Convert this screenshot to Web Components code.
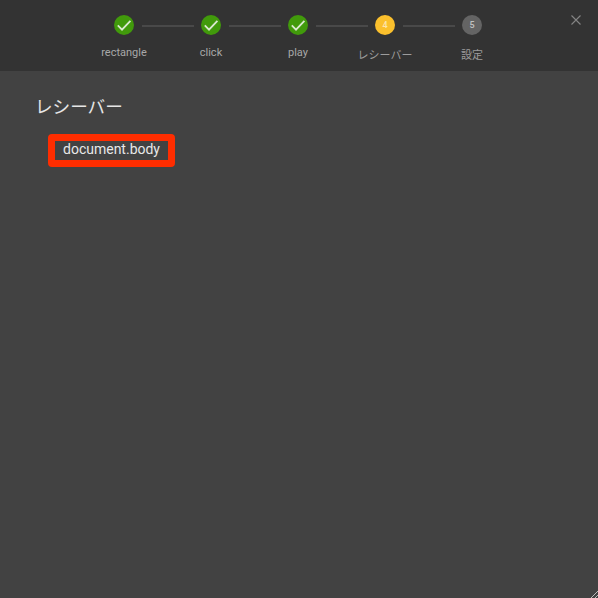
<!DOCTYPE html>
<html><head><meta charset="utf-8"><style>
html,body{margin:0;padding:0;height:100%;background:#424242}
body{font-family:Roboto,"Noto Sans CJK JP",sans-serif}
</style></head><body>
<app-dialog>
<step-bar>
<step-item state="done" label="rectangle"></step-item>
<step-item state="done" label="click"></step-item>
<step-item state="done" label="play"></step-item>
<step-item state="active" n="4" label="レシーバー"></step-item>
<step-item state="todo" n="5" label="設定" last></step-item>
</step-bar>
<receiver-panel heading="レシーバー"><receiver-chip>document.body</receiver-chip></receiver-panel>
</app-dialog>
<script>
function def(name,html){customElements.define(name,class extends HTMLElement{connectedCallback(){if(this.shadowRoot)return;const r=this.attachShadow({mode:'open'});r.innerHTML=typeof html==='function'?html(this):html;}})}
def('app-dialog',`<style>:host{display:flex;flex-direction:column;height:598px;width:598px;position:relative;overflow:hidden;background:#424242}
.grip{position:absolute;right:0;bottom:0;width:10px;height:10px}</style><slot></slot>
<svg class="grip" viewBox="0 0 10 10"><path d="M3 10L10 3M7 10L10 7" stroke="#bdbdbd" stroke-width="1" fill="none"/></svg>`);
def('step-bar',`<style>:host{display:flex;justify-content:center;height:71px;box-sizing:border-box;padding:15px 2px 0 0;background:#333;position:relative;flex:none}
.x{position:absolute;left:571px;top:15px;width:10px;height:10px}</style><slot></slot>
<svg class="x" viewBox="0 0 10 10"><path d="M.5 .5L9.5 9.5M9.5 .5L.5 9.5" stroke="#858585" stroke-width="1.1" fill="none"/></svg>`);
const check=`<svg width="20" height="20" viewBox="0 0 20 20"><path d="M3.8 10.4L8 14.6L16.4 5.8" stroke="#dbe8d0" stroke-width="1.8" fill="none"/></svg>`;
def('step-item',h=>{
const s=h.getAttribute('state'),n=h.getAttribute('n')||'',l=h.getAttribute('label');
const bg={done:'#419a0b',active:'#fbc02d',todo:'#646464'}[s];
const jp=/[^\x00-\x7f]/.test(l);
return `<style>:host{display:block;width:87px;position:relative;flex:none}
.c{width:20px;height:20px;border-radius:50%;background:${bg};margin:0 auto;display:flex;align-items:center;justify-content:center;font:500 9px Roboto,sans-serif;color:rgba(255,255,255,.62)}
.l{position:absolute;left:-20px;right:-20px;top:${jp?'34px':'31px'};text-align:center;font-size:11px;line-height:14px;color:${jp?'#9c9c9c':'#a8a8a8'}}
.b{position:absolute;left:61px;top:10px;width:52px;height:1.5px;background:#494949}</style>
<div class="c">${s==='done'?check:n}</div><div class="l">${l}</div>${h.hasAttribute('last')?'':'<div class="b"></div>'}`});
def('receiver-panel',h=>`<style>:host{display:block;padding:24px 36px}
h2{margin:0 0 15px;font:400 17.6px/24px Roboto,"Noto Sans CJK JP",sans-serif;color:#e6e6e6;margin-left:-1px}
.w{padding-left:12px;display:flex}</style><h2>${h.getAttribute('heading')}</h2><div class="w"><slot></slot></div>`);
def('receiver-chip',`<style>:host{display:block;box-sizing:border-box;width:127px;height:33px;border:7px solid #ff2d00;border-radius:4px;background:#424242;color:#e8e8e8;font:400 14px/16px Roboto,sans-serif;text-align:center;white-space:nowrap}</style><slot></slot>`);
</script></body></html>
